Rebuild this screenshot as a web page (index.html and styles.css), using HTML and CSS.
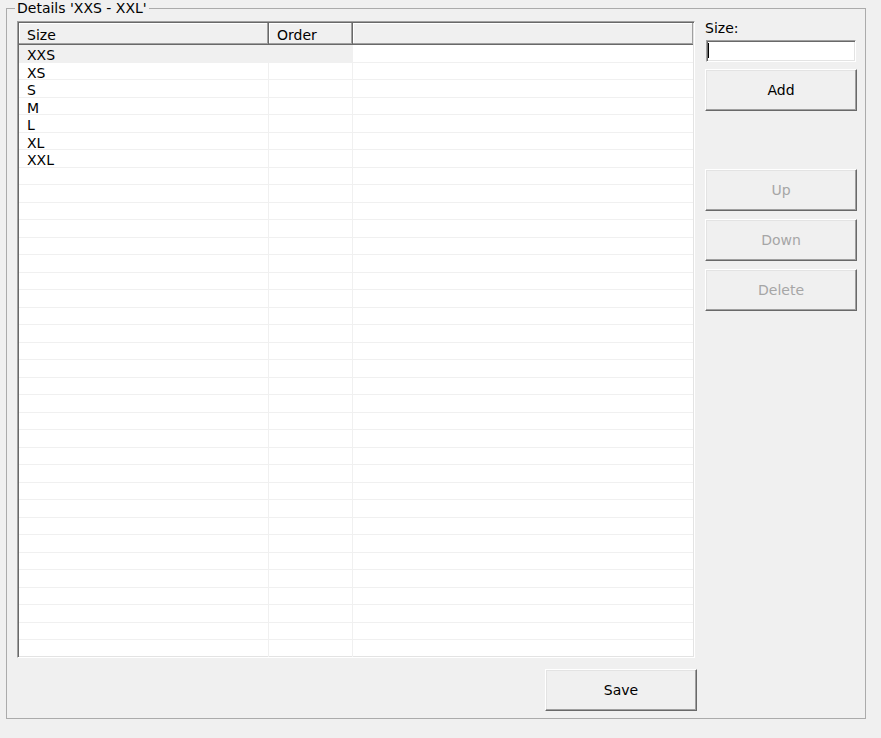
FILE: index.html
```html
<!DOCTYPE html>
<html lang="en">
<head>
    <meta charset="UTF-8">
    <meta name="viewport" content="width=device-width, initial-scale=1.0">
    <title>Size Details</title>
    <link rel="stylesheet" href="styles.css">
</head>
<body>

<!-- size group details -->
<fieldset class="group">
    <legend>Details 'XXS - XXL'</legend>

    <div class="layout">
        <div class="main">
            <div class="list">
                <div class="list-head">
                    <div class="head-cell">Size</div>
                    <div class="head-cell">Order</div>
                    <div class="head-cell"></div>
                </div>
                <div class="list-body">
                    <div class="row selected"><div class="cell">XXS</div><div class="cell"></div><div class="cell"></div></div>
                    <div class="row"><div class="cell">XS</div><div class="cell"></div><div class="cell"></div></div>
                    <div class="row"><div class="cell">S</div><div class="cell"></div><div class="cell"></div></div>
                    <div class="row"><div class="cell">M</div><div class="cell"></div><div class="cell"></div></div>
                    <div class="row"><div class="cell">L</div><div class="cell"></div><div class="cell"></div></div>
                    <div class="row"><div class="cell">XL</div><div class="cell"></div><div class="cell"></div></div>
                    <div class="row"><div class="cell">XXL</div><div class="cell"></div><div class="cell"></div></div>
                    <!-- empty grid rows -->
                    <div class="row"><div class="cell"></div><div class="cell"></div><div class="cell"></div></div>
                    <div class="row"><div class="cell"></div><div class="cell"></div><div class="cell"></div></div>
                    <div class="row"><div class="cell"></div><div class="cell"></div><div class="cell"></div></div>
                    <div class="row"><div class="cell"></div><div class="cell"></div><div class="cell"></div></div>
                    <div class="row"><div class="cell"></div><div class="cell"></div><div class="cell"></div></div>
                    <div class="row"><div class="cell"></div><div class="cell"></div><div class="cell"></div></div>
                    <div class="row"><div class="cell"></div><div class="cell"></div><div class="cell"></div></div>
                    <div class="row"><div class="cell"></div><div class="cell"></div><div class="cell"></div></div>
                    <div class="row"><div class="cell"></div><div class="cell"></div><div class="cell"></div></div>
                    <div class="row"><div class="cell"></div><div class="cell"></div><div class="cell"></div></div>
                    <div class="row"><div class="cell"></div><div class="cell"></div><div class="cell"></div></div>
                    <div class="row"><div class="cell"></div><div class="cell"></div><div class="cell"></div></div>
                    <div class="row"><div class="cell"></div><div class="cell"></div><div class="cell"></div></div>
                    <div class="row"><div class="cell"></div><div class="cell"></div><div class="cell"></div></div>
                    <div class="row"><div class="cell"></div><div class="cell"></div><div class="cell"></div></div>
                    <div class="row"><div class="cell"></div><div class="cell"></div><div class="cell"></div></div>
                    <div class="row"><div class="cell"></div><div class="cell"></div><div class="cell"></div></div>
                    <div class="row"><div class="cell"></div><div class="cell"></div><div class="cell"></div></div>
                    <div class="row"><div class="cell"></div><div class="cell"></div><div class="cell"></div></div>
                    <div class="row"><div class="cell"></div><div class="cell"></div><div class="cell"></div></div>
                    <div class="row"><div class="cell"></div><div class="cell"></div><div class="cell"></div></div>
                    <div class="row"><div class="cell"></div><div class="cell"></div><div class="cell"></div></div>
                    <div class="row"><div class="cell"></div><div class="cell"></div><div class="cell"></div></div>
                    <div class="row"><div class="cell"></div><div class="cell"></div><div class="cell"></div></div>
                    <div class="row"><div class="cell"></div><div class="cell"></div><div class="cell"></div></div>
                    <div class="row"><div class="cell"></div><div class="cell"></div><div class="cell"></div></div>
                    <div class="row"><div class="cell"></div><div class="cell"></div><div class="cell"></div></div>
                    <div class="row"><div class="cell"></div><div class="cell"></div><div class="cell"></div></div>
                </div>
            </div>

            <div class="actions">
                <button class="btn" type="button">Save</button>
            </div>
        </div>

        <!-- side panel -->
        <div class="side">
            <label class="side-label">Size:</label>
            <div class="field"><span class="caret"></span></div>
            <button class="btn add" type="button">Add</button>
            <button class="btn up" type="button" disabled>Up</button>
            <button class="btn move" type="button" disabled>Down</button>
            <button class="btn move" type="button" disabled>Delete</button>
        </div>
    </div>
</fieldset>

</body>
</html>
```

FILE: styles.css
```css
/* general */
body {
    margin: 0;
    background: #f0f0f0;
    font-family: "DejaVu Sans", Verdana, sans-serif;
    font-size: 14px;
    color: #000;
}

/* group box */
.group {
    margin: 0 0 0 6px;
    width: 860px;
    min-width: 0;
    box-sizing: border-box;
    border: 1px solid #ababab;
    padding: 4px 8px 7px 10px;
}

.group legend {
    margin-left: -2px;
    padding: 0 2px;
    line-height: 17px;
}

.layout {
    display: flex;
    gap: 8px;
}

.main {
    width: 680px;
    display: flex;
    flex-direction: column;
}

/* list view */
.list {
    width: 678px;
    height: 637px;
    box-sizing: border-box;
    padding: 1px;
    background: #fff;
    border: 1px solid;
    border-color: #a0a0a0 #fff #fff #a0a0a0;
    box-shadow: inset 1px 1px 0 #696969, inset -1px -1px 0 #e3e3e3;
    overflow: hidden;
}

.list-head, .row {
    display: grid;
    grid-template-columns: 250px 84px 1fr;
}

.list-head {
    grid-template-rows: 22px;
}

.head-cell {
    box-sizing: border-box;
    padding-left: 8px;
    line-height: 25px;
    background: #f0f0f0;
    border-right: 1px solid #696969;
    border-bottom: 1px solid #696969;
    box-shadow: inset -1px -1px 0 #a0a0a0, inset 1px 1px 0 #fff;
}

.head-cell:last-child {
    border-right: none;
}

.row {
    grid-template-rows: 17.5px;
}

.cell {
    box-sizing: border-box;
    padding-left: 8px;
    line-height: 21px;
    border-bottom: 1px solid #f0f0f0;
    border-right: 1px solid #f0f0f0;
    white-space: nowrap;
}

.cell:last-child {
    border-right: none;
}

.row.selected .cell:not(:last-child) {
    background: #f0f0f0;
}

.actions {
    display: flex;
    justify-content: flex-end;
    margin-top: 11px;
}

/* side panel */
.side {
    width: 152px;
    display: flex;
    flex-direction: column;
}

.side-label {
    line-height: 14px;
}

.field {
    margin: 5px 0 0 1px;
    width: 150px;
    height: 22px;
    box-sizing: border-box;
    padding: 2px 0 0 1px;
    background: #fff;
    border: 1px solid;
    border-color: #a0a0a0 #fff #fff #a0a0a0;
    box-shadow: inset 1px 1px 0 #696969, inset -1px -1px 0 #e3e3e3;
    display: flex;
}

.caret {
    width: 1px;
    height: 15px;
    background: #000;
}

/* buttons */
.btn {
    width: 152px;
    height: 42px;
    box-sizing: border-box;
    padding: 0;
    background: #f0f0f0;
    font-family: inherit;
    font-size: 14px;
    color: #000;
    border: 1px solid;
    border-color: #fff #696969 #696969 #fff;
    box-shadow: inset -1px -1px 0 #a0a0a0, inset 1px 1px 0 #e3e3e3;
}

.btn:disabled {
    color: #a6a6a6;
}

.add {
    margin-top: 7px;
}

.up {
    margin-top: 58px;
}

.move {
    margin-top: 8px;
}
```
